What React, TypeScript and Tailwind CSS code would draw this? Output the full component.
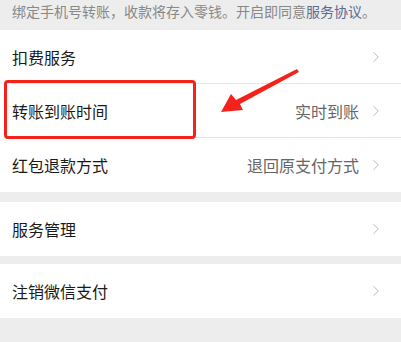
import { ChevronRight } from 'lucide-react';

const font = { fontFamily: '"Noto Sans CJK SC", "Noto Sans", sans-serif' };

function Row({ label, value, divider }: { label: string; value?: string; divider?: boolean }) {
  return (
    <div className="relative flex h-[54px] items-center pl-3 pr-4">
      <span className="flex-1 text-[16px] text-[#1a1a1a]">{label}</span>
      {value && <span className="mr-2 text-[16px] text-[#666]">{value}</span>}
      <ChevronRight className="h-[18px] w-[18px] text-[#b8b8b8]" strokeWidth={1.3} />
      {divider && <div className="absolute bottom-0 left-3 right-0 h-px bg-[#e5e5e5]" />}
    </div>
  );
}

export default function App() {
  return (
    <div className="relative h-[342px] w-[401px] overflow-hidden bg-[#ededed]" style={font}>
      <div className="flex h-[30px] items-start pl-3 pt-[1px] text-[14px] leading-5 text-[#888]">
        <span>
          绑定手机号转账，收款将存入零钱。开启即同意<span className="text-[#576b95]">服务协议</span>。
        </span>
      </div>

      <div className="bg-white">
        <Row label="扣费服务" divider />
        <Row label="转账到账时间" value="实时到账" divider />
        <Row label="红包退款方式" value="退回原支付方式" />
      </div>

      <div className="mt-[10px] bg-white">
        <Row label="服务管理" />
      </div>

      <div className="mt-[8px] bg-white">
        <Row label="注销微信支付" />
      </div>

      {/* annotation */}
      <div className="absolute left-[4px] top-[80px] h-[59px] w-[192px] rounded-[4px] border-[3px] border-[#f5221b]" />
      <svg className="absolute left-0 top-0" width="401" height="342" viewBox="0 0 401 342">
        <path d="M297 69 L299 72 L240 104 L243 110 L221 112 L231 94 L236 100 Z" fill="#f5221b" />
      </svg>
    </div>
  );
}
